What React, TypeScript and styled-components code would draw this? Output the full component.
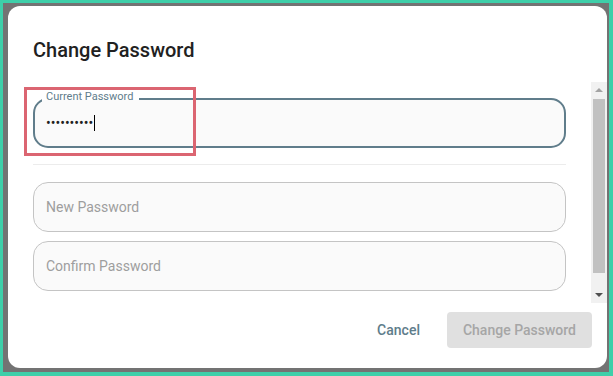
import styled, { createGlobalStyle } from 'styled-components';

const GlobalStyle = createGlobalStyle`
  html, body { margin: 0; padding: 0; }
  body { font-family: Roboto, 'Liberation Sans', sans-serif; }
`;

const Frame = styled.div`
  box-sizing: border-box;
  width: 613px;
  height: 376px;
  display: flex;
  padding: 3px 4px 4px 3px;
  background: #3ecfa9;
`;

const Backdrop = styled.div`
  flex: 1;
  display: flex;
  padding: 3px 2px 4px 5px;
  background: #737373;
`;

const Dialog = styled.div`
  flex: 1;
  display: flex;
  flex-direction: column;
  min-height: 0;
  background: #fff;
  border-radius: 12px;
  overflow: hidden;
`;

const Title = styled.h2`
  margin: 0;
  padding: 28px 25px 16px;
  font-size: 20px;
  line-height: 32px;
  font-weight: 500;
  color: #212121;
`;

const Content = styled.div`
  flex: 1;
  min-height: 0;
  display: flex;
`;

const Body = styled.div`
  flex: 1;
  min-width: 0;
  overflow: hidden;
  padding: 16px 25px 28px;
`;

// the browser hides real scrollbars, so the classic one is drawn
const Scrollbar = styled.div`
  width: 16px;
  display: flex;
  flex-direction: column;
  background: #f1f1f1;
`;

const Arrow = styled.div<{ $down?: boolean }>`
  height: 17px;
  display: flex;
  align-items: center;
  justify-content: center;

  &::before {
    content: '';
    border-left: 4px solid transparent;
    border-right: 4px solid transparent;
    ${(p) =>
      p.$down
        ? 'border-top: 4px solid #505050; margin-top: 1px;'
        : 'border-bottom: 4px solid #a3a3a3; margin-bottom: 1px;'}
  }
`;

const Track = styled.div`
  flex: 1;
  padding: 0 2px;
`;

const Thumb = styled.div`
  height: 174px;
  background: #c1c1c1;
`;

const Field = styled.div<{ $active?: boolean }>`
  position: relative;
  box-sizing: border-box;
  height: 50px;
  display: flex;
  align-items: center;
  padding-left: ${(p) => (p.$active ? '11px' : '12px')};
  border: ${(p) => (p.$active ? '2px solid #607d8b' : '1px solid #c4c4c4')};
  border-radius: 15px;
  background: #fafafa;
`;

const FloatLabel = styled.span`
  position: absolute;
  left: 7px;
  top: -10px;
  padding: 0 6px 0 4px;
  font-size: 11px;
  line-height: 13px;
  color: #607d8b;
  background: linear-gradient(to bottom, #fff 0 10px, #fafafa 10px);
`;

const Placeholder = styled.span`
  font-size: 14px;
  color: #9e9e9e;
`;

const Dots = styled.span`
  font-size: 14px;
  color: #212121;
`;

const Caret = styled.span`
  display: inline-block;
  width: 1px;
  height: 16px;
  margin-left: 1px;
  background: #000;
`;

const Highlight = styled.div`
  position: absolute;
  left: -11px;
  top: -13px;
  width: 172px;
  height: 69px;
  box-sizing: border-box;
  border: 3px solid #db6571;
  pointer-events: none;
`;

const Divider = styled.hr`
  margin: 16px 0 17px;
  height: 1px;
  border: none;
  background: #ececec;
`;

const Stack = styled.div`
  display: flex;
  flex-direction: column;
  gap: 9px;
`;

const Actions = styled.div`
  display: flex;
  justify-content: flex-end;
  align-items: center;
  gap: 19px;
  padding: 9px 15px 20px;
`;

const Button = styled.button<{ $variant: 'text' | 'contained' }>`
  height: 36px;
  border: none;
  border-radius: 4px;
  font-family: inherit;
  font-size: 14px;
  font-weight: 500;
  padding: ${(p) => (p.$variant === 'text' ? '0 8px' : '0 16px')};
  color: ${(p) => (p.$variant === 'text' ? '#607d8b' : '#a6a6a6')};
  background: ${(p) => (p.$variant === 'text' ? 'transparent' : '#e0e0e0')};
  cursor: pointer;
`;

export default function App() {
  return (
    <>
      <GlobalStyle />
      <Frame>
        <Backdrop>
          <Dialog>
            <Title>Change Password</Title>
            <Content>
              <Body>
                <Field $active>
                  <FloatLabel>Current Password</FloatLabel>
                  <Dots>••••••••••</Dots>
                  <Caret />
                  <Highlight />
                </Field>
                <Divider />
                <Stack>
                  <Field>
                    <Placeholder>New Password</Placeholder>
                  </Field>
                  <Field>
                    <Placeholder>Confirm Password</Placeholder>
                  </Field>
                </Stack>
              </Body>
              <Scrollbar>
                <Arrow />
                <Track>
                  <Thumb />
                </Track>
                <Arrow $down />
              </Scrollbar>
            </Content>
            <Actions>
              <Button $variant="text">Cancel</Button>
              <Button $variant="contained" disabled>
                Change Password
              </Button>
            </Actions>
          </Dialog>
        </Backdrop>
      </Frame>
    </>
  );
}
